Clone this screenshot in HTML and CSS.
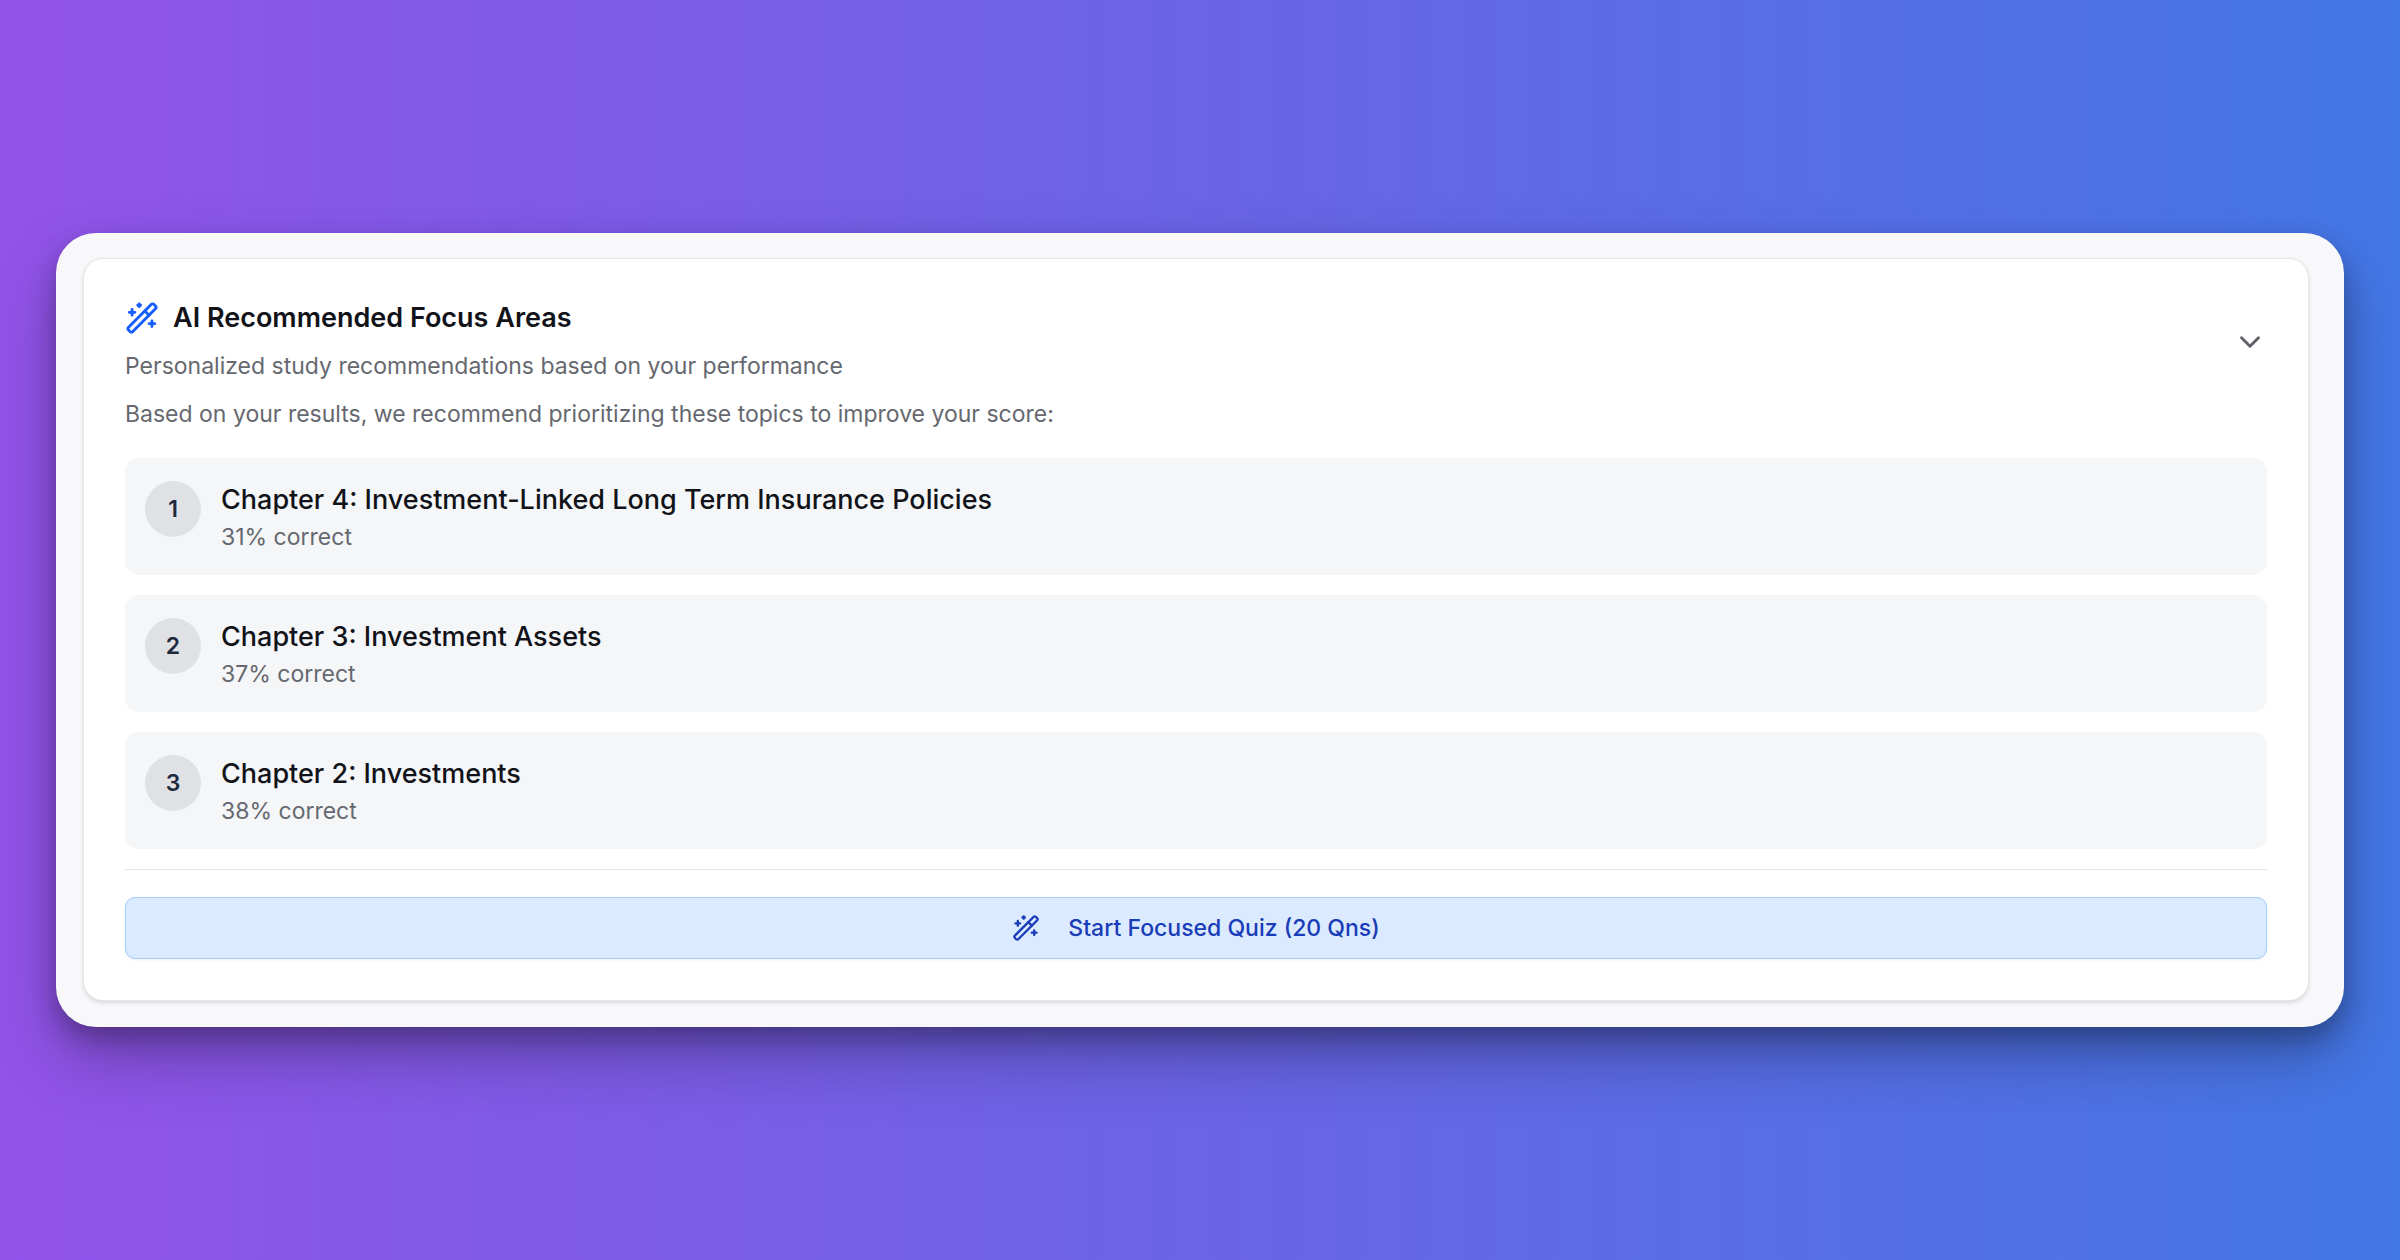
FILE: index.html
```html
<!DOCTYPE html>
<html lang="en">
<head>
    <meta charset="UTF-8">
    <meta name="viewport" content="width=device-width, initial-scale=1.0">
    <title>AI Recommended Focus Areas</title>
    <link rel="stylesheet" href="styles.css">
</head>
<body>
    <!-- Shared icon shapes -->
    <svg class="icon-defs" aria-hidden="true">
        <symbol id="wand" viewBox="0 0 24 24">
            <path d="m21.64 3.64-1.28-1.28a1.21 1.21 0 0 0-1.72 0L2.36 18.64a1.21 1.21 0 0 0 0 1.72l1.28 1.28a1.2 1.2 0 0 0 1.72 0L21.64 5.36a1.2 1.2 0 0 0 0-1.72"/>
            <path d="m14 7 3 3M5 6v4M19 14v4M10 2v2M7 8H3M21 16h-4M11 3H9"/>
        </symbol>
        <symbol id="chevron" viewBox="0 0 24 24">
            <path d="m6 9 6 6 6-6"/>
        </symbol>
    </svg>

    <main class="frame">
        <section class="card">
            <header class="card-header">
                <div class="heading">
                    <h1 class="title">
                        <svg class="icon icon-title" aria-hidden="true"><use href="#wand"/></svg>
                        AI Recommended Focus Areas
                    </h1>
                    <p class="muted">Personalized study recommendations based on your performance</p>
                </div>
                <button type="button" class="toggle" aria-label="Collapse" aria-expanded="true">
                    <svg class="icon" aria-hidden="true"><use href="#chevron"/></svg>
                </button>
            </header>

            <p class="muted">Based on your results, we recommend prioritizing these topics to improve your score:</p>

            <ol class="topics">
                <li class="topic">
                    <span class="rank">1</span>
                    <div>
                        <h2 class="topic-name">Chapter 4: Investment-Linked Long Term Insurance Policies</h2>
                        <p class="muted">31% correct</p>
                    </div>
                </li>
                <li class="topic">
                    <span class="rank">2</span>
                    <div>
                        <h2 class="topic-name">Chapter 3: Investment Assets</h2>
                        <p class="muted">37% correct</p>
                    </div>
                </li>
                <li class="topic">
                    <span class="rank">3</span>
                    <div>
                        <h2 class="topic-name">Chapter 2: Investments</h2>
                        <p class="muted">38% correct</p>
                    </div>
                </li>
            </ol>

            <div class="actions">
                <button type="button" class="start">
                    <svg class="icon icon-start" aria-hidden="true"><use href="#wand"/></svg>
                    Start Focused Quiz (20 Qns)
                </button>
            </div>
        </section>
    </main>
</body>
</html>
```

FILE: styles.css
```css
* {
    box-sizing: border-box;
}

body {
    margin: 0;
    min-height: 100vh;
    padding: 56px;
    display: flex;
    align-items: center;
    font-family: Inter, "Liberation Sans", sans-serif;
    font-size: 23px;
    line-height: 34px;
    color: #111318;
    background: linear-gradient(to right, #9253e9, #6a64e6 50%, #4477e6);
}

h1, h2, p, ol {
    margin: 0;
    padding: 0;
}

button {
    font: inherit;
    cursor: pointer;
}

.icon-defs {
    display: none;
}

.icon {
    width: 34px;
    height: 34px;
    flex-shrink: 0;
    fill: none;
    stroke: currentColor;
    stroke-width: 2;
    stroke-linecap: round;
    stroke-linejoin: round;
}

.frame {
    width: 100%;
    padding: 25px 35px 26px 27px;
    border-radius: 40px;
    background-color: #f8f8fa;
    box-shadow: 0 32px 64px rgba(0, 0, 0, 0.25), 0 12px 24px rgba(0, 0, 0, 0.25);
}

.card {
    padding: 42px 41px 41px;
    border: 1px solid #e6e6e9;
    border-radius: 20px;
    background-color: #fff;
    box-shadow: 0 2px 4px rgba(0, 0, 0, 0.12);
}

.card-header {
    display: flex;
    justify-content: space-between;
    align-items: center;
    margin-bottom: 14px;
}

.heading {
    display: grid;
    gap: 14px;
}

.title {
    display: flex;
    align-items: center;
    gap: 14px;
    font-size: 27px;
    font-weight: 600;
}

.icon-title {
    color: #155dfc;
}

.muted {
    color: #66686f;
}

.toggle {
    display: flex;
    padding: 0;
    border: none;
    background: none;
    color: #5f6168;
}

/* Topic list */
.topics {
    display: grid;
    gap: 20px;
    margin-top: 27px;
    list-style: none;
}

.topic {
    display: flex;
    gap: 20px;
    padding: 21px 20px;
    border-radius: 14px;
    background-color: #f5f6f8;
}

.rank {
    display: flex;
    align-items: center;
    justify-content: center;
    width: 56px;
    height: 56px;
    margin-top: 2px;
    border-radius: 50%;
    background-color: #e0e1e5;
    color: #1d293d;
    font-weight: 600;
}

.topic-name {
    font-size: 27px;
    font-weight: 500;
    line-height: 41px;
}

.actions {
    margin-top: 20px;
    padding-top: 27px;
    border-top: 1px solid #e4e4e7;
}

.start {
    display: flex;
    align-items: center;
    justify-content: center;
    gap: 28px;
    width: 100%;
    height: 62px;
    border: 1px solid #a3cdff;
    border-radius: 10px;
    background-color: #dbeafe;
    box-shadow: 0 1px 3px rgba(0, 0, 0, 0.06);
    color: #193cb8;
    font-weight: 500;
}

.icon-start {
    width: 28px;
    height: 28px;
}
```
